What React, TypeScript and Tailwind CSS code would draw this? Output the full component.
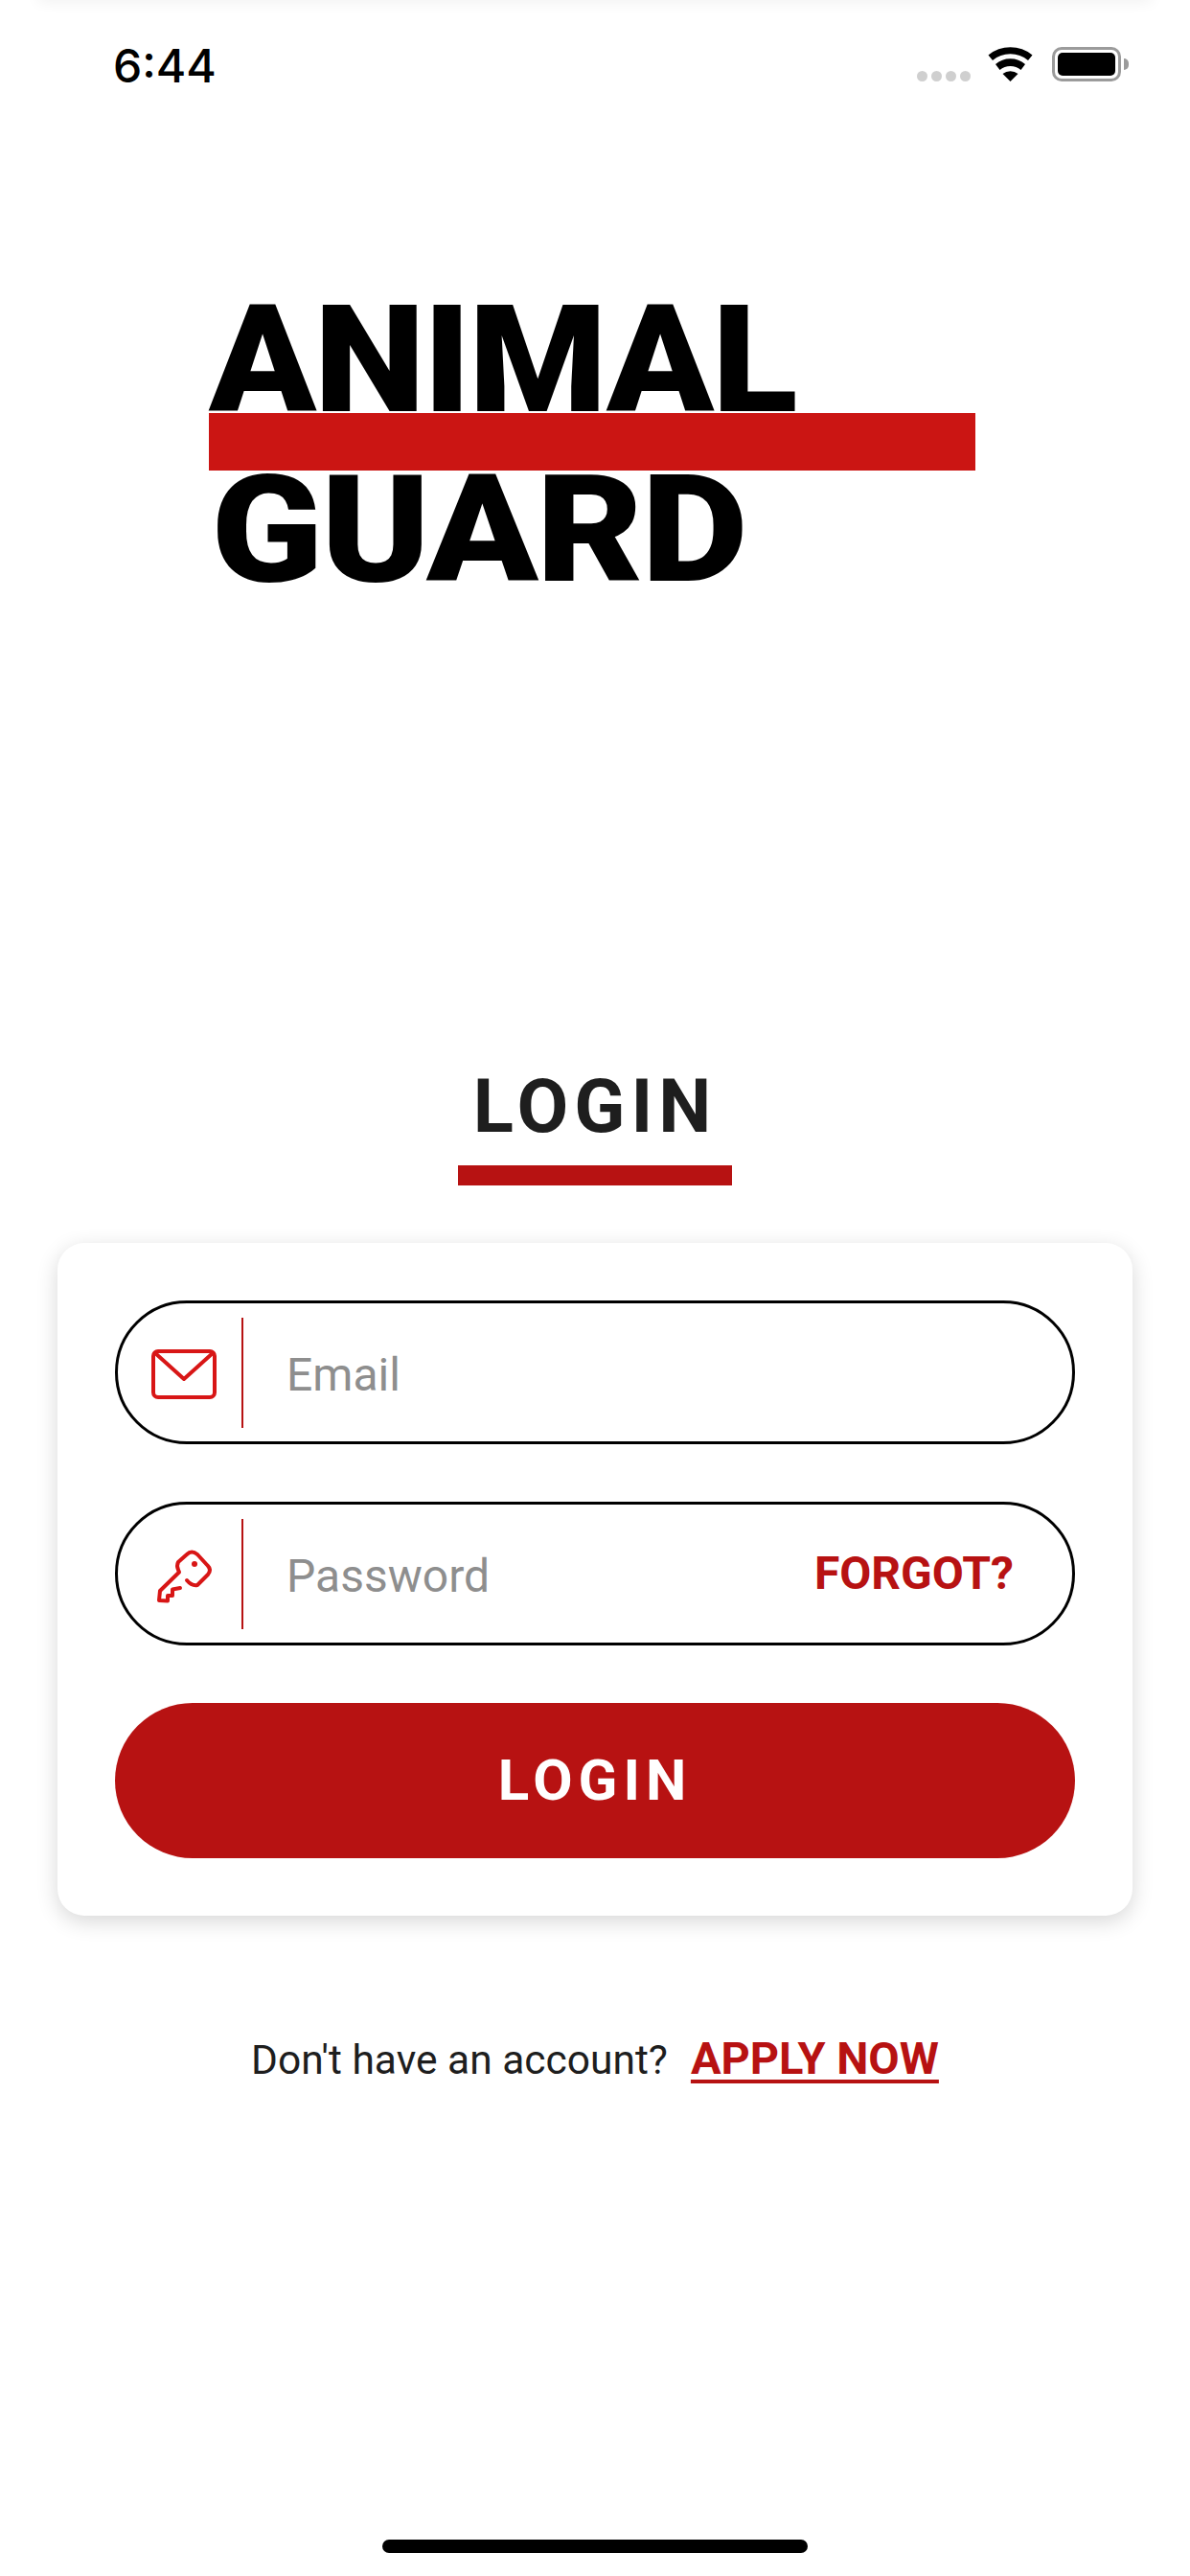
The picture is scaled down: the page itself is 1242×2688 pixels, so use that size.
const sans = "font-['Roboto',sans-serif]";

function MailIcon() {
  return (
    <svg width="68" height="52" viewBox="0 0 68 52" fill="none" stroke="#d81616" strokeWidth="4" strokeLinejoin="round" className="mt-[4px]">
      <rect x="2" y="2" width="64" height="48" rx="5" />
      <path d="M3.5 3.5 34 31 64.5 3.5" />
    </svg>
  );
}

function KeyIcon() {
  return (
    <svg width="80" height="80" viewBox="0 0 80 80" fill="none" stroke="#d81616" strokeWidth="4" strokeLinejoin="round" strokeLinecap="round" className="mt-[6px] -ml-[4px]">
      <path d="M45 44Q50 50 56 49L67 38Q71 33 67 29L56 17Q50 12 45 17L36 25Q34 29 36 33L37 35.500 17 55 16 65 25 65.500V60H30V53.500L38 52" />
      <circle cx="53" cy="27" r="3" fill="#d81616" stroke="none" />
    </svg>
  );
}

function StatusBar() {
  return (
    <div className="flex h-[134px] items-center justify-between pl-[118px] pr-[72px]">
      <span className="mt-[3px] font-['Inter',sans-serif] text-[48px] leading-none font-medium text-black">6:44</span>
      <div className="flex items-center">
        <div className="mt-[25px] mr-[18px] flex gap-[4px]">
          <span className="h-[11px] w-[11px] rounded-full bg-[#cfcfcf]" />
          <span className="h-[11px] w-[11px] rounded-full bg-[#cfcfcf]" />
          <span className="h-[11px] w-[11px] rounded-full bg-[#cfcfcf]" />
          <span className="h-[11px] w-[11px] rounded-full bg-[#cfcfcf]" />
        </div>
        <svg width="47" height="36" viewBox="0 0 46 36" className="mr-[20px]">
          <path d="M23 36 15 28a13 13 0 0 1 16 0Z" fill="#000" />
          <path d="M12 24 7.500 18a24 24 0 0 1 31 0L34 24a17 17 0 0 0-22 0Z" fill="#000" />
          <path d="M4.500 14 0 8.500a36 36 0 0 1 46 0L41.500 14a29 29 0 0 0-37 0Z" fill="#000" />
        </svg>
        <div className="relative h-[36px] w-[72px] rounded-[10px] border-[3px] border-[#9b9b9b] p-[3px]">
          <div className="h-full w-full rounded-[5px] bg-black" />
          <span className="absolute top-[9px] right-[-11px] h-[12px] w-[5px] rounded-r-full bg-[#9b9b9b]" />
        </div>
      </div>
    </div>
  );
}

function Logo() {
  return (
    <div className="mt-[181px] ml-[218px] flex w-[800px] flex-col font-['Roboto',sans-serif] font-black text-black">
      <div className="h-[116px] origin-left scale-x-[1.056] text-[156px] leading-[122px] tracking-[-2px]">ANIMAL</div>
      <div className="h-[60px] bg-[#cb1513]" />
      <div className="mt-[3px] h-[112px] origin-left scale-x-[1.1] pl-[2px] text-[156px] leading-[118px] tracking-[-2px]">GUARD</div>
    </div>
  );
}

function Field({ icon, label, action }: { icon: React.ReactNode; label: string; action?: string }) {
  return (
    <div className="flex h-[150px] items-center rounded-full border-[3px] border-black pr-[61px]">
      <div className="flex w-[129px] justify-center pl-[9px]">{icon}</div>
      <div className="h-[115px] w-[2px] bg-[#b71212]" />
      <span className="mt-[5px] ml-[45px] flex-1 text-[48px] leading-none text-[#8e8e8e]">{label}</span>
      {action && <span className="text-[48px] leading-none font-bold text-[#b71212]">{action}</span>}
    </div>
  );
}

export default function App() {
  return (
    <div className={`relative flex h-[2688px] w-[1242px] flex-col overflow-hidden bg-white ${sans}`}>
      <div className="absolute top-[-20px] right-[40px] left-[40px] h-[20px] shadow-[0_2px_16px_rgba(0,0,0,0.06)]" />
      <StatusBar />
      <Logo />

      <div className="mt-[503px] flex flex-col items-center">
        <h1 className="text-[78px] leading-[92px] font-bold tracking-[6px] text-[#1e1e1e]">LOGIN</h1>
        <div className="mt-[15px] h-[21px] w-[286px] bg-[#b71212]" />
      </div>

      <div className="mx-[60px] mt-[60px] flex flex-col gap-[60px] rounded-[28px] bg-white p-[60px] shadow-[0_6px_22px_rgba(0,0,0,0.16)]">
        <Field icon={<MailIcon />} label="Email" />
        <Field icon={<KeyIcon />} label="Password" action="FORGOT?" />
        <button className="flex h-[162px] items-center justify-center rounded-full bg-[#b71212] text-[60px] leading-none font-bold tracking-[6px] text-white">
          LOGIN
        </button>
      </div>

      <div className="mt-[125px] flex items-baseline justify-center gap-[24px]">
        <span className="text-[42.5px] leading-none text-[#1e1e1e]">Don't have an account?</span>
        <a className="text-[47px] leading-none font-bold text-[#b71212] underline decoration-[4px] underline-offset-[6px]">APPLY NOW</a>
      </div>

      <div className="absolute bottom-[24px] left-[399px] h-[14px] w-[444px] rounded-full bg-black" />
    </div>
  );
}
